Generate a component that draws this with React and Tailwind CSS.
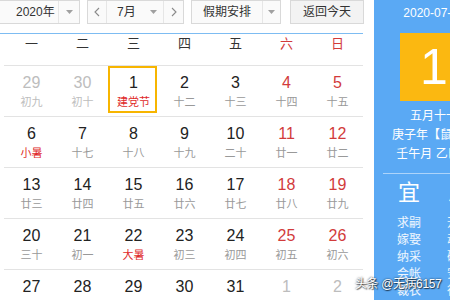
import React from 'react';

const weeks = ['一', '二', '三', '四', '五', '六', '日'];

const rows = [
  [['29', '初九', 'o'], ['30', '初十', 'o'], ['1', '建党节', 'f'], ['2', '十二'], ['3', '十三'], ['4', '十四'], ['5', '十五']],
  [['6', '小暑', 'f'], ['7', '十七'], ['8', '十八'], ['9', '十九'], ['10', '二十'], ['11', '廿一'], ['12', '廿二']],
  [['13', '廿三'], ['14', '廿四'], ['15', '廿五'], ['16', '廿六'], ['17', '廿七'], ['18', '廿八'], ['19', '廿九']],
  [['20', '三十'], ['21', '初一'], ['22', '大暑', 'f'], ['23', '初三'], ['24', '初四'], ['25', '初五'], ['26', '初六']],
  [['27', '初七'], ['28', '初八'], ['29', '初九'], ['30', '初十'], ['31', '十一'], ['1', '十二', 'o'], ['2', '十三', 'o']],
];

const Caret = () => (
  <svg width="7" height="4" viewBox="0 0 7 4" className="text-[#a0a0a0]">
    <path d="M0 0h7L3.5 4z" fill="currentColor" />
  </svg>
);

const Chevron = ({ dir }) => (
  <svg width="6" height="10" viewBox="0 0 6 10" className="text-[#8a8a8a]">
    <path d={dir === 'l' ? 'M5 1L1 5l4 4' : 'M1 1l4 4-4 4'} fill="none" stroke="currentColor" strokeWidth="1.1" />
  </svg>
);

const DayCell = ({ day, col }) => {
  const [num, lunar, kind] = day;
  const other = kind === 'o';
  const weekend = col >= 5;
  const numColor = other ? 'text-[#bdbdbd]' : weekend ? 'text-[#d23b3b]' : 'text-[#222]';
  const lunarColor = other ? 'text-[#bdbdbd]' : kind === 'f' ? 'text-[#e02a2a]' : 'text-[#999]';
  const today = num === '1' && kind === 'f';
  return (
    <div className="relative flex flex-col items-center pt-[7px]">
      {today && <div className="absolute left-0 right-[2px] top-0 bottom-[3px] border-2 border-[#f7b500]" />}
      <span className={`text-[16px] leading-[20px] ${numColor}`}>{num}</span>
      <span className={`mt-[2px] text-[11px] leading-[14px] ${lunarColor}`}>{lunar}</span>
    </div>
  );
};

export default function App() {
  return (
    <div
      className="relative flex w-[450px] h-[300px] overflow-hidden bg-white"
      style={{ fontFamily: '"Liberation Sans", Arial, "Noto Sans CJK SC", sans-serif' }}
    >
      <div className="w-[374px] shrink-0">
        <div className="flex h-[24px] text-[12px] text-[#333]">
          <div className="ml-[-1px] w-[81px] flex border border-[#d9d9d9] bg-[#fafafa]">
            <div className="w-[58px] flex items-center pl-[16px]">2020年</div>
            <div className="flex-1 flex items-center justify-center border-l border-[#e6e6e6]"><Caret /></div>
          </div>
          <div className="ml-[7px] w-[97px] flex border border-[#d9d9d9] bg-[#fafafa]">
            <div className="w-[19px] flex items-center justify-center border-r border-[#e6e6e6]"><Chevron dir="l" /></div>
            <div className="w-[56px] flex items-center pl-[10px]">
              <span>7月</span>
              <span className="ml-[14px] flex"><Caret /></span>
            </div>
            <div className="flex-1 flex items-center justify-center border-l border-[#e6e6e6]"><Chevron dir="r" /></div>
          </div>
          <div className="ml-[7px] w-[90px] flex border border-[#d9d9d9] bg-[#fafafa]">
            <div className="w-[70px] flex items-center pl-[11px]">假期安排</div>
            <div className="flex-1 flex items-center justify-center border-l border-[#e6e6e6]"><Caret /></div>
          </div>
          <div className="ml-[9px] w-[74px] flex items-center justify-center border border-[#d9d9d9] bg-[#f3f3f3]">返回今天</div>
        </div>

        <div className="mt-[9px] h-px w-[363px] bg-[#7dbcf2]" />

        <div className="ml-[6px] w-[357px] h-[31px] grid grid-cols-7 text-[13px]">
          {weeks.map((w, i) => (
            <div key={w} className={`text-center leading-[20px] ${i >= 5 ? 'text-[#d23b3b]' : 'text-[#333]'}`}>{w}</div>
          ))}
        </div>

        {rows.map((r, ri) => (
          <div key={ri} className="ml-[4px] w-[359px] h-[51px] border-t border-[#e3e3e3] pl-[2px]">
            <div className="grid grid-cols-7 h-[50px]">
              {r.map((d, ci) => <DayCell key={ci} day={d} col={ci} />)}
            </div>
          </div>
        ))}
      </div>

      <div className="w-[120px] shrink-0 bg-[#5aa9f4] flex flex-col items-center text-white">
        <div className="pt-[5px] text-[12px] leading-[16px]">2020-07-01</div>
        <div className="mt-[12px] w-[68px] h-[70px] bg-[#fbb811] flex items-center justify-center text-[50px] leading-none">1</div>
        <div className="mt-[6px] flex flex-col items-center text-[12px] leading-[19px] whitespace-nowrap">
          <span>五月十一</span>
          <span>庚子年【鼠年】</span>
          <span>壬午月 乙巳日</span>
        </div>
        <div className="mt-[9px] h-px w-[102px] bg-white/50" />
        <div className="flex gap-[24px]">
          <div className="w-[26px] flex flex-col items-center">
            <span className="mt-[6px] text-[22px] leading-[26px]">宜</span>
            <div className="mt-[9px] flex flex-col items-center text-[12px] leading-[17px] text-white/90 whitespace-nowrap">
              <span>求嗣</span>
              <span>嫁娶</span>
              <span>纳采</span>
              <span>会帐</span>
              <span>裁衣</span>
            </div>
          </div>
          <div className="w-[26px] flex flex-col items-center">
            <span className="mt-[6px] text-[22px] leading-[26px]">忌</span>
            <div className="mt-[9px] flex flex-col items-center text-[12px] leading-[17px] text-white/90 whitespace-nowrap">
              <span>开市</span>
              <span>动土</span>
              <span>破土</span>
              <span>安葬</span>
              <span>行丧</span>
            </div>
          </div>
        </div>
      </div>

      <div
        className="absolute left-[355px] top-[277px] text-[12px] leading-[15px] tracking-[-0.4px] text-white whitespace-nowrap"
        style={{ textShadow: '0 0 2px rgba(0,0,0,0.8), 1px 1px 1px rgba(0,0,0,0.6)' }}
      >
        头条 @无病6157
      </div>
    </div>
  );
}
